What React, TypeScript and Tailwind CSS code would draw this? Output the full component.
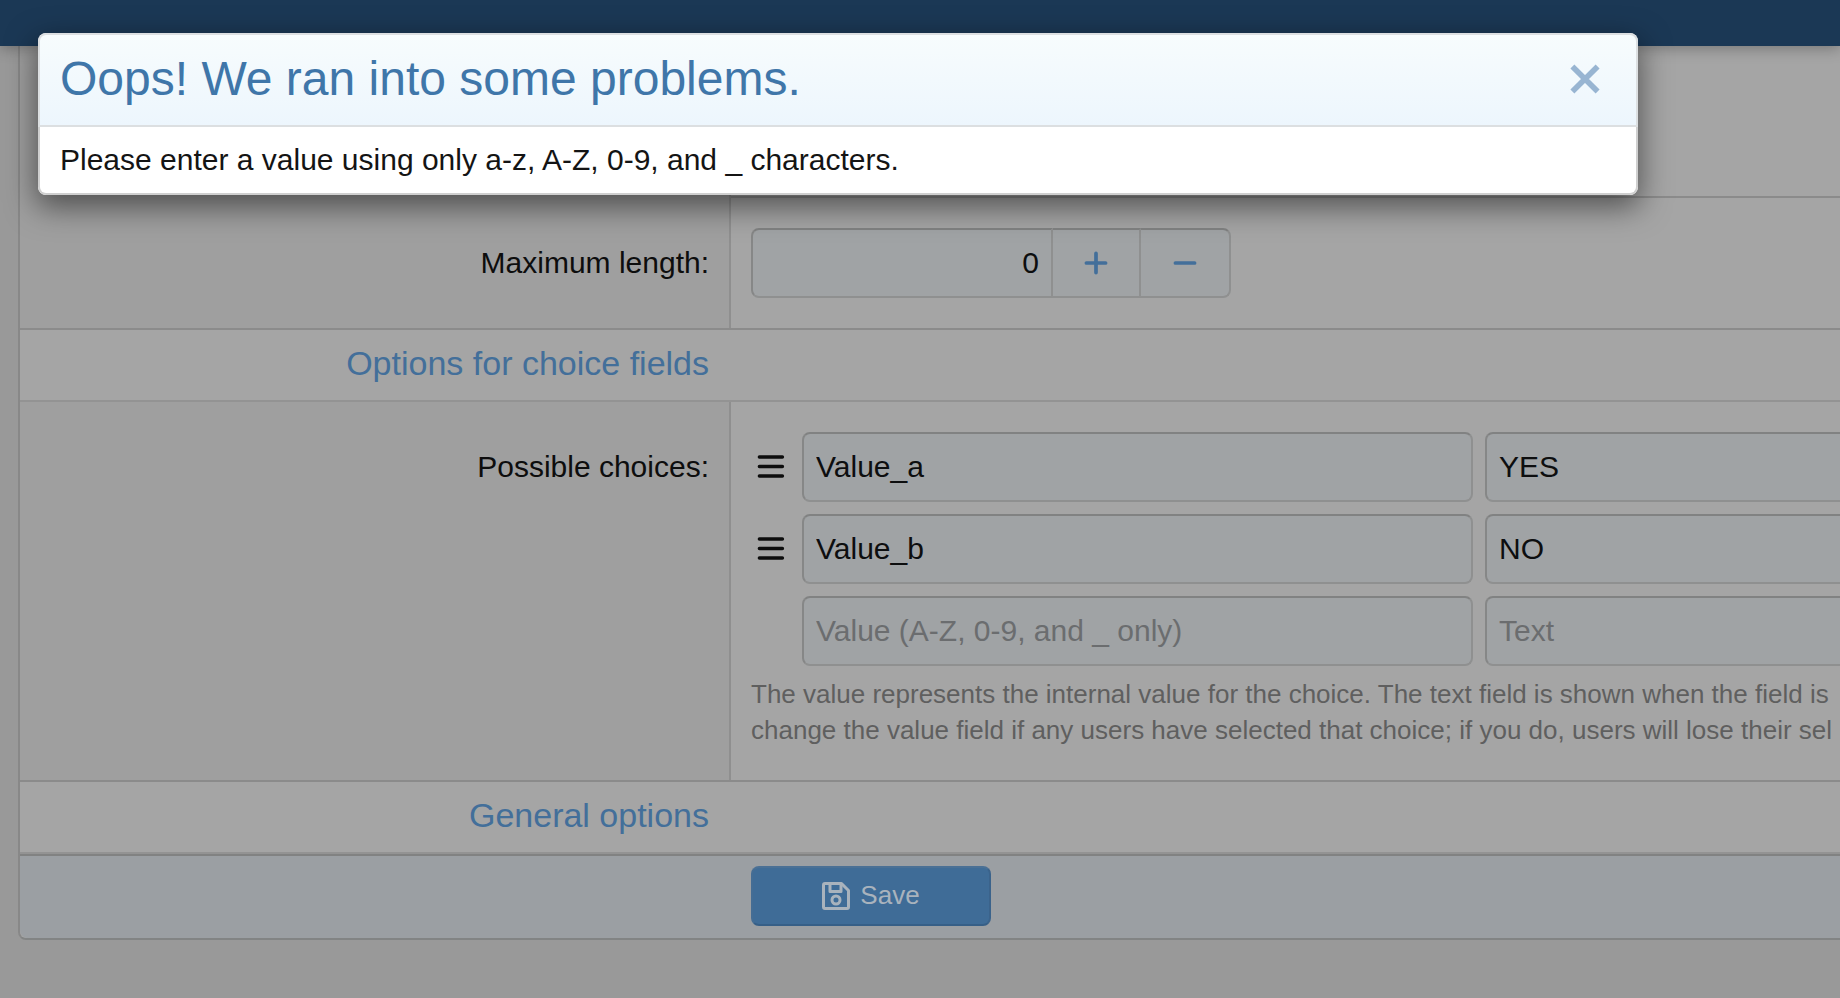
import type { ReactNode } from "react";

const field =
  "h-[70px] border-2 border-t-[#818282] border-l-[#868787] border-r-[#8f9090] border-b-[#8f9090] bg-[#a0a3a5] px-3 text-[30px] text-[#0d0e0f] placeholder:text-[#6b6d6f] outline-none";

const stepper =
  "flex items-center justify-center border-y-2 border-r-2 border-t-[#818282] border-r-[#8f9090] border-b-[#8f9090] bg-[#a0a3a5]";

function SectionHeader({ children }: { children: string }) {
  return (
    <div className="grid grid-cols-[711px_minmax(0,1fr)] border-b-2 border-[#939393]">
      <h3 className="h-[70px] pr-[22px] text-right text-[34px] leading-[66px] text-[#436f9a]">{children}</h3>
    </div>
  );
}

function FormRow({ label, htmlFor, children }: { label: string; htmlFor: string; children?: ReactNode }) {
  return (
    <div className="grid grid-cols-[711px_minmax(0,1fr)] border-b-2 border-[#8b8b8b]">
      <div className="border-r-2 border-[#8f8f8f] bg-[#9f9f9f] pt-11 pr-5 text-right">
        <label htmlFor={htmlFor} className="text-[30px] leading-[42px]">{label}</label>
      </div>
      <div className="min-w-0 py-[30px] pl-5">{children}</div>
    </div>
  );
}

function Grip() {
  return (
    <svg viewBox="0 0 28 24" className="h-6 w-7" fill="none" stroke="#0d0d0d" strokeWidth="3.5" strokeLinecap="round">
      <path d="M2.4 2H25.4M2.4 11.5H25.4M2.4 21H25.4" />
    </svg>
  );
}

function Choice({ id, value, text }: { id: string; value?: string; text?: string }) {
  return (
    <div className="flex items-center">
      <div className="w-[51px] shrink-0 pl-1.5">{value && <Grip />}</div>
      <input
        id={id}
        aria-label="Value"
        defaultValue={value}
        placeholder="Value (A-Z, 0-9, and _ only)"
        className={`${field} w-[671px] shrink-0 rounded-lg`}
      />
      <input
        aria-label="Text"
        defaultValue={text}
        placeholder="Text"
        className={`${field} ml-3 min-w-0 flex-1 rounded-l-lg border-r-0`}
      />
    </div>
  );
}

export default function App() {
  return (
    <div className="relative min-h-screen overflow-hidden bg-[#999999] font-['Liberation_Sans',Arial,sans-serif] text-[#0d0d0d]">
      <header className="relative h-[46px] bg-[#1b3855] shadow-[0_2px_14px_rgba(0,0,0,0.3)]" />

      <form className="ml-[18px] rounded-bl-lg border-b-2 border-l-2 border-b-[#828484] border-l-[#888888] bg-[#a5a5a5]" onSubmit={(e) => e.preventDefault()}>
        <div className="grid h-[152px] grid-cols-[711px_minmax(0,1fr)]">
          <div className="border-r-2 border-[#8f8f8f] bg-[#9f9f9f]" />
          <div className="border-b-2 border-[#8b8b8b]" />
        </div>

        <FormRow label="Maximum length:" htmlFor="max-length">
          <div className="flex h-[70px] w-[480px]">
            <input id="max-length" defaultValue="0" inputMode="numeric" className={`${field} w-[302px] rounded-l-lg text-right`} />
            <button type="button" aria-label="Increase" className={`${stepper} w-[88px]`}>
              <svg viewBox="0 0 24 24" className="size-6" fill="none" stroke="#436f9a" strokeWidth="3.7" strokeLinecap="round">
                <path d="M12 2.4V21.6M2.4 12H21.6" />
              </svg>
            </button>
            <button type="button" aria-label="Decrease" className={`${stepper} w-[90px] rounded-r-lg`}>
              <svg viewBox="0 0 24 24" className="size-6" fill="none" stroke="#436f9a" strokeWidth="3.7" strokeLinecap="round">
                <path d="M2.4 12H21.6" />
              </svg>
            </button>
          </div>
        </FormRow>

        <SectionHeader>Options for choice fields</SectionHeader>

        <FormRow label="Possible choices:" htmlFor="choice-a">
          <div className="flex flex-col gap-3">
            <Choice id="choice-a" value="Value_a" text="YES" />
            <Choice id="choice-b" value="Value_b" text="NO" />
            <Choice id="choice-new" />
          </div>
          <p className="mt-[10px] pb-0.5 text-[26px] leading-9 whitespace-nowrap text-[#5f5f5f]">
            The value represents the internal value for the choice. The text field is shown when the field is
            <br />
            change the value field if any users have selected that choice; if you do, users will lose their sel
          </p>
        </FormRow>

        <SectionHeader>General options</SectionHeader>

        <div className="rounded-bl-lg border-t-2 border-[#818282] bg-[#9b9fa3] pt-[10px] pb-3 pl-[731px]">
          <button type="submit" className="flex h-[60px] w-[240px] items-center justify-center gap-[10px] rounded-lg border-2 border-t-[#4a7095] border-r-[#3b638b] border-b-[#365f87] border-l-[#456d94] bg-[#3f6c97] text-[26px] text-[#a9b3bd]">
            <svg viewBox="0 0 28 28" className="size-7" fill="none" stroke="currentColor" strokeWidth="3" strokeLinejoin="round">
              <path d="M3 1.5H19.5L26.5 8.5V25Q26.5 26.5 25 26.5H3Q1.5 26.5 1.5 25V3Q1.5 1.5 3 1.5Z" />
              <path d="M8 2V9.5H19V2" />
              <circle cx="14" cy="18" r="4" />
            </svg>
            <span className="pb-0.5">Save</span>
          </button>
        </div>
      </form>

      <section role="dialog" aria-labelledby="dialog-title" className="absolute top-[33px] right-[202px] left-[38px] overflow-hidden rounded-lg bg-white shadow-[0_10px_30px_2px_rgba(0,0,0,0.5)]">
        <div className="flex h-[94px] items-center justify-between rounded-t-lg border-2 border-[#dcdfe1] bg-linear-to-b from-[#f7fcfd] to-[#edf6fd] pr-9 pb-0.5 pl-5">
          <h1 id="dialog-title" className="text-[48px] leading-[68px] text-[#3f76a9]">Oops! We ran into some problems.</h1>
          <button type="button" aria-label="Close" className="text-[#98b5d2]">
            <svg viewBox="0 0 30 30" className="size-[30px]" fill="none" stroke="currentColor" strokeWidth="5.6" strokeLinejoin="round">
              <path d="M2.4 2.4L27.6 27.6M27.6 2.4L2.4 27.6" />
            </svg>
          </button>
        </div>
        <p className="rounded-b-lg border-x-2 border-b-2 border-[#cfcfcf] bg-white px-5 py-3 text-[30px] leading-[42px] text-[#141414]">
          Please enter a value using only a-z, A-Z, 0-9, and _ characters.
        </p>
      </section>
    </div>
  );
}
